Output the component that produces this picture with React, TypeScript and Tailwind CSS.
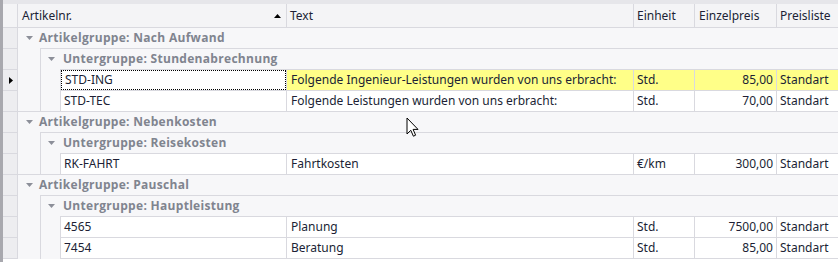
import React from "react";

const LINE = "border-[#d9d9df]";

function Indicator({ focused, first }: { focused?: boolean; first?: boolean }) {
  return (
    <div className={`w-[15px] shrink-0 bg-[#ededf0] border-r ${LINE} ${first ? "" : `border-t ${LINE}`} flex items-center justify-center`}>
      {focused && (
        <svg width="4" height="7" viewBox="0 0 4 7" className="ml-[2px]">
          <path d="M0 0 L4 3.5 L0 7 Z" fill="#000" />
        </svg>
      )}
    </div>
  );
}

function GroupArrow() {
  return (
    <svg width="7" height="4" viewBox="0 0 7 4" className="shrink-0">
      <path d="M0 0 L7 0 L3.5 4 Z" fill="#8c8f99" />
    </svg>
  );
}

function Indent({ w }: { w: string }) {
  return <div className={`${w} shrink-0 bg-[#f7f7f9] border-r ${LINE}`} />;
}

function GroupRow({ level, label }: { level: 0 | 1; label: string }) {
  return (
    <div className="flex h-[21px]">
      <Indicator />
      {level === 1 && <Indent w="w-[23px]" />}
      <div className={`flex-1 flex items-center bg-[#f7f7f9] border-t ${LINE} ${level === 0 ? "pl-[8px]" : "pl-[7px]"}`}>
        <GroupArrow />
        <span className={`font-['Open_Sans'] font-bold tracking-[0.3px] text-[12px] text-[#80848f] leading-none ${level === 0 ? "ml-[6px]" : "ml-[8px]"}`}>{label}</span>
      </div>
    </div>
  );
}

type Item = { nr: string; text: string; unit: string; price: string; list: string; focused?: boolean };

function DataRow({ item, last }: { item: Item; last?: boolean }) {
  const f = item.focused;
  const hl = f ? "bg-[#ffff88]" : "bg-white";
  return (
    <div className={`flex ${last ? "h-[22px]" : "h-[21px]"}`}>
      <div className={`w-[15px] shrink-0 bg-[#ededf0] border-r ${LINE} border-t ${last ? "border-b" : ""} flex items-center justify-center`}>
        {f && (
          <svg width="4" height="7" viewBox="0 0 4 7" className="ml-[2px]">
            <path d="M0 0 L4 3.5 L0 7 Z" fill="#000" />
          </svg>
        )}
      </div>
      <Indent w="w-[23px]" />
      <Indent w="w-[20px]" />
      <div className={`flex flex-1 border-t ${LINE} ${last ? "border-b" : ""}`}>
        <div className={`w-[226px] shrink-0 border-r ${LINE} bg-white flex items-stretch`}>
          <div className={`flex-1 flex items-center pl-[3px] ${f ? "border border-dotted border-[#000] pl-[2px]" : ""}`}>{item.nr}</div>
        </div>
        <div className={`w-[347px] shrink-0 border-r ${LINE} ${hl} flex items-center pl-[4px] whitespace-nowrap`}>{item.text}</div>
        <div className={`w-[61px] shrink-0 border-r ${LINE} ${hl} flex items-center pl-[3px]`}>{item.unit}</div>
        <div className={`w-[82px] shrink-0 border-r ${LINE} ${hl} flex items-center justify-end pr-[3px]`}>{item.price}</div>
        <div className={`flex-1 ${hl} flex items-center pl-[3px] whitespace-nowrap`}>{item.list}</div>
      </div>
    </div>
  );
}

export default function App() {
  return (
    <div className="relative w-[838px] h-[262px] bg-white overflow-hidden flex font-['Noto_Sans'] text-[12px] text-[#201f35] leading-none">
      <div className="w-[3px] shrink-0 bg-[#a8a8ae]" />
      <div className="flex-1 flex flex-col min-w-0">
        <div className="h-[4px] bg-[#e6e6ea]" />
        {/* Header */}
        <div className="flex h-[23px] bg-[#f4f4f6]">
          <div className={`w-[15px] shrink-0 border-r ${LINE}`} />
          <div className={`w-[269px] shrink-0 border-r ${LINE} flex items-center pl-[4px] pr-[5px]`}>
            <span className="flex-1">Artikelnr.</span>
            <svg width="7" height="4" viewBox="0 0 7 4">
              <path d="M0 4 L3.5 0 L7 4 Z" fill="#000" />
            </svg>
          </div>
          <div className={`w-[347px] shrink-0 border-r ${LINE} flex items-center pl-[3px]`}>Text</div>
          <div className={`w-[61px] shrink-0 border-r ${LINE} flex items-center pl-[3px]`}>Einheit</div>
          <div className={`w-[82px] shrink-0 border-r ${LINE} flex items-center pl-[4px]`}>Einzelpreis</div>
          <div className="flex-1 flex items-center pl-[3px]">Preisliste</div>
        </div>
        <GroupRow level={0} label="Artikelgruppe: Nach Aufwand" />
        <GroupRow level={1} label="Untergruppe: Stundenabrechnung" />
        <DataRow item={{ nr: "STD-ING", text: "Folgende Ingenieur-Leistungen wurden von uns erbracht:", unit: "Std.", price: "85,00", list: "Standart", focused: true }} />
        <DataRow item={{ nr: "STD-TEC", text: "Folgende Leistungen wurden von uns erbracht:", unit: "Std.", price: "70,00", list: "Standart" }} />
        <GroupRow level={0} label="Artikelgruppe: Nebenkosten" />
        <GroupRow level={1} label="Untergruppe: Reisekosten" />
        <DataRow item={{ nr: "RK-FAHRT", text: "Fahrtkosten", unit: "€/km", price: "300,00", list: "Standart" }} />
        <GroupRow level={0} label="Artikelgruppe: Pauschal" />
        <GroupRow level={1} label="Untergruppe: Hauptleistung" />
        <DataRow item={{ nr: "4565", text: "Planung", unit: "Std.", price: "7500,00", list: "Standart" }} />
        <DataRow item={{ nr: "7454", text: "Beratung", unit: "Std.", price: "85,00", list: "Standart" }} last />
      </div>
      {/* mouse cursor */}
      <svg className="absolute left-[406px] top-[117px]" width="13" height="21" viewBox="0 0 13 21">
        <path d="M1 1 L1 17 L4.8 13.3 L7.4 19.2 L9.6 18.2 L7.1 12.4 L12 12.4 Z" fill="#fff" stroke="#000" strokeWidth="1" strokeLinejoin="miter" />
      </svg>
    </div>
  );
}
